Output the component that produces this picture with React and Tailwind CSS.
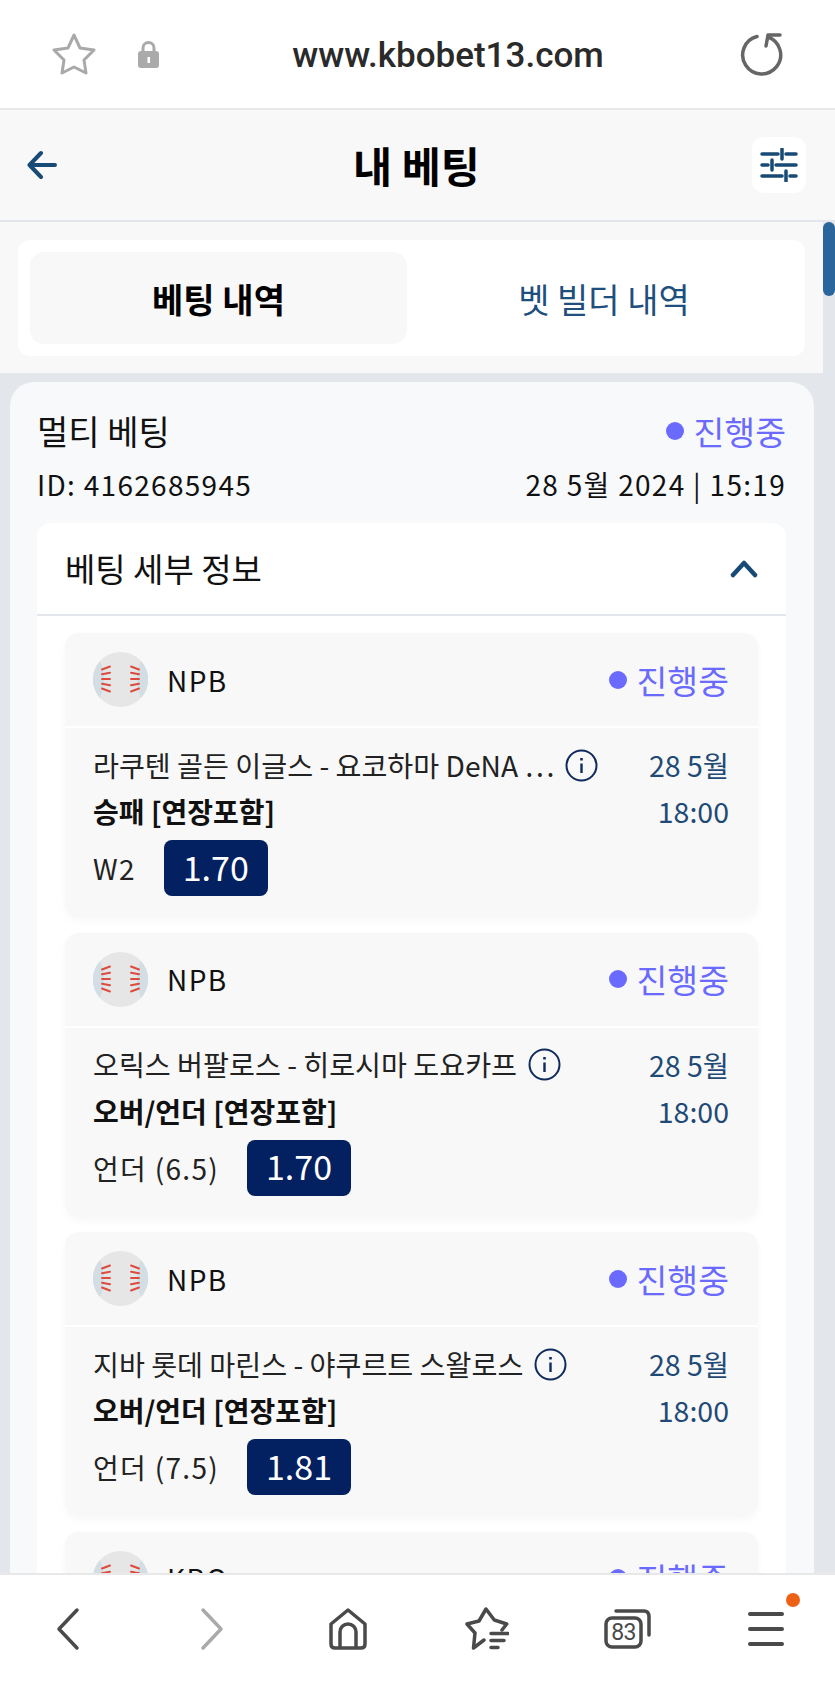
const BETS = [
  { league: "NPB", match: "라쿠텐 골든 이글스 - 요코하마 DeNA ⋯", market: "승패 [연장포함]", pick: "W2", odds: "1.70" },
  { league: "NPB", match: "오릭스 버팔로스 - 히로시마 도요카프", market: "오버/언더 [연장포함]", pick: "언더 (6.5)", odds: "1.70" },
  { league: "NPB", match: "지바 롯데 마린스 - 야쿠르트 스왈로스", market: "오버/언더 [연장포함]", pick: "언더 (7.5)", odds: "1.81" },
  { league: "KBO" },
];

function Baseball() {
  const stitches = [
    [16, -1.5], [21.500, -0.8], [27, 0], [32.500, 0.8], [38, 1.5],
  ];
  return (
    <svg width="55" height="55" viewBox="0 0 55 55" className="shrink-0">
      <circle cx="27.5" cy="27.5" r="27.5" fill="#e6e6e6" />
      <path d="M7 9A27.5 27.5 0 0 0 7 46Q15 27.5 7 9Z" fill="#d3dee4" />
      <path d="M48 9A27.5 27.5 0 0 1 48 46Q40 27.5 48 9Z" fill="#d3dee4" />
      {stitches.map(([y, t]) => (
        <g key={y} stroke="#dc4b3e" strokeWidth="1.900" strokeLinecap="round">
          <path d={`M9 ${y - t}L17 ${y + t}`} />
          <path d={`M38 ${y + t}L46 ${y - t}`} />
        </g>
      ))}
    </svg>
  );
}

function Status() {
  return (
    <span className="flex items-center gap-[10px] text-[#6a6aff] text-[33.5px] leading-none">
      <span className="w-[18px] h-[18px] rounded-full bg-[#6a6aff]" />
      진행중
    </span>
  );
}

function BetCard({ bet }) {
  return (
    <div className="shrink-0 bg-[#f8f8f8] rounded-[14px] shadow-[0_4px_10px_rgba(0,0,0,0.03)] h-[284px]">
      <div className="h-[95px] flex items-center justify-between pl-7 pr-[29px] border-b-2 border-white">
        <div className="flex items-center gap-[19px]">
          <Baseball />
          <span className="text-[28px] tracking-[1.4px] text-[#111]">{bet.league}</span>
        </div>
        <Status />
      </div>
      {bet.match && (
        <div className="flex justify-between pl-7 pr-[29px] pt-[18px]">
          <div className="min-w-0">
            <div className="flex items-center h-[38px]">
              <span className="whitespace-nowrap text-[28.2px] leading-none text-[#222]">{bet.match}</span>
              <svg width="33" height="33" viewBox="0 0 33 33" className="ml-[11px] shrink-0" fill="none" stroke="#0f2a5e" strokeWidth="2">
                <circle cx="16.5" cy="16.5" r="15" />
                <path d="M16.5 14.5V24" strokeWidth="2.4" />
                <path d="M16.5 9V11.5" strokeWidth="2.6" />
              </svg>
            </div>
            <div className="mt-[8px] text-[28px] leading-[38px] font-bold text-[#111]">{bet.market}</div>
            <div className="mt-[10px] flex items-center gap-[28px]">
              <span className="text-[28px] tracking-[1.3px] text-[#222]">{bet.pick}</span>
              <span className="w-[104px] h-[56px] pb-1 rounded-[8px] bg-[#032060] text-white text-[34px] flex items-center justify-center">{bet.odds}</span>
            </div>
          </div>
          <div className="shrink-0 text-right text-[28.5px] leading-[38px] text-[#1f4a75]">
            <div>28 5월</div>
            <div className="mt-[8px]">18:00</div>
          </div>
        </div>
      )}
    </div>
  );
}

export default function App() {
  return (
    <div className="w-[835px] h-[1683px] flex flex-col overflow-hidden bg-[#e3e6ea] font-['Noto_Sans_CJK_KR','Noto_Sans',sans-serif]">
      {/* browser bar */}
      <div className="shrink-0 h-[110px] bg-white border-b-2 border-[#e8e8e8] flex items-center pl-[52px] pr-[51px]">
        <svg width="44" height="44" viewBox="0 0 44 44" fill="none" stroke="#a9a9a9" strokeWidth="3" strokeLinejoin="round">
          <path d="M22 3L28 16L42 18L32 28L34 41L22 35L10 41L12 28L2 18L16 16Z" />
        </svg>
        <svg width="23" height="28" viewBox="0 0 23 28" className="ml-[41px]">
          <path d="M6 13V8a5.500 5.500 0 0 1 11 0V13" fill="none" stroke="#aaa" strokeWidth="3" />
          <rect x="1" y="11" width="21" height="17" rx="3" fill="#aaa" />
          <rect x="10.500" y="17" width="2.500" height="6" fill="#fff" />
        </svg>
        <div className="flex-1 text-center pt-1 text-[35px] font-medium text-[#2a2a2a] font-['Roboto',sans-serif] pr-[4px]">www.kbobet13.com</div>
        <svg width="44" height="44" viewBox="0 0 44 44" fill="none" stroke="#666" strokeWidth="3.500" strokeLinecap="round" strokeLinejoin="round">
          <path d="M17 4.500A19 19 0 1 0 28 5" />
          <path d="M40 3H28L26 14" />
        </svg>
      </div>

      {/* page header */}
      <div className="shrink-0 h-[112px] bg-[#f8f8f8] border-b-2 border-[#e3e6ea] flex items-center justify-between pl-[27px] pr-[29px]">
        <div className="w-[54px]">
          <svg width="30" height="30" viewBox="0 0 30 30" fill="none" stroke="#174a75" strokeWidth="4" strokeLinecap="round" strokeLinejoin="round">
            <path d="M14 3L2.500 15L14 27M3 15H28" />
          </svg>
        </div>
        <div className="text-[42.5px] font-bold text-black leading-none">내 베팅</div>
        <div className="w-[54px] h-[56px] bg-white rounded-[12px] flex items-center justify-center">
          <svg width="38" height="34" viewBox="0 0 38 34" fill="none" stroke="#174a75" strokeWidth="3.500" strokeLinecap="round">
            <path d="M2 6H18M26 6H36M22 1V11" />
            <path d="M2 17H8M16 17H36M12 12V22" />
            <path d="M2 28H22M30 28H36M26 23V33" />
          </svg>
        </div>
      </div>

      {/* content */}
      <div className="relative flex-1 min-h-0 overflow-hidden">
        <div className="absolute right-0 top-0 w-3 h-[74px] rounded-full bg-[#2a659c]" />
        <div className="mr-3 bg-[#f8f8f8] pt-[18px] pb-[17px] pl-[18px] pr-[18px]">
          <div className="h-[116px] bg-white rounded-[12px] p-3 flex">
            <div className="w-[377px] rounded-[14px] bg-[#f8f8f8] flex items-center justify-center text-[34px] font-bold text-black">베팅 내역</div>
            <div className="flex-1 flex items-center justify-center pl-[8px] text-[34px] text-[#1f4f7d]">벳 빌더 내역</div>
          </div>
        </div>
        <div className="mt-[9px] ml-[10px] w-[804px] bg-[#f8f9fa] rounded-[24px] pl-[27px] pr-[28px] pt-[26px]">
          <div className="flex items-center justify-between h-[46px]">
            <span className="text-[34px] leading-none text-[#111]">멀티 베팅</span>
            <Status />
          </div>
          <div className="flex items-center justify-between mt-[10px] h-[40px] text-[28px] tracking-[1.3px] text-[#111]">
            <span>ID: 4162685945</span>
            <span>28 5월 2024 | 15:19</span>
          </div>
          <div className="mt-[19px] bg-white rounded-t-[14px]">
            <div className="h-[93px] flex items-center justify-between pl-7 pr-7 border-b-2 border-[#e3e6ea]">
              <span className="text-[33px] text-[#111]">베팅 세부 정보</span>
              <svg width="28" height="18" viewBox="0 0 28 18" fill="none" stroke="#174a75" strokeWidth="4.500" strokeLinecap="round" strokeLinejoin="round">
                <path d="M3 15L14 3L25 15" />
              </svg>
            </div>
            <div className="px-7 pt-[17px] flex flex-col gap-[15.5px]">
              {BETS.map((b, i) => <BetCard key={i} bet={b} />)}
            </div>
          </div>
        </div>
      </div>

      {/* browser bottom nav */}
      <div className="shrink-0 h-[110px] bg-white border-t-2 border-[#e8e8e8] flex items-center pl-[56px]">
        <svg width="24" height="44" viewBox="0 0 24 44" fill="none" stroke="#4a4a4a" strokeWidth="3.500" strokeLinecap="round" strokeLinejoin="round">
          <path d="M21 3L3 22L21 41" />
        </svg>
        <svg width="24" height="44" viewBox="0 0 24 44" fill="none" stroke="#aaa" strokeWidth="3.500" strokeLinecap="round" strokeLinejoin="round" className="ml-[120px]">
          <path d="M3 3L21 22L3 41" />
        </svg>
        <svg width="40" height="42" viewBox="0 0 40 42" fill="none" stroke="#4a4a4a" strokeWidth="3.500" strokeLinejoin="round" className="ml-[104px]">
          <path d="M20 2L3 16V36Q3 40 7 40H33Q37 40 37 36V16Z" />
          <path d="M12 40V24a8 8 0 0 1 16 0V40" />
        </svg>
        <svg width="44" height="44" viewBox="0 0 44 44" fill="none" stroke="#4a4a4a" strokeWidth="3.500" strokeLinecap="round" strokeLinejoin="round" className="ml-[97px]">
          <path d="M37 23L41.700 17L29.300 13L21 2L14 14L2 17L10 26L8.500 41L19 33" />
          <path d="M26 26.500H43M26 33.500H39M26 40.500H33" />
        </svg>
        <div className="relative ml-[95px] w-[47px] h-[40px]">
          <svg width="47" height="40" viewBox="0 0 47 40" fill="none" stroke="#4a4a4a" strokeWidth="3.500" strokeLinecap="round">
            <rect x="2" y="9" width="35" height="29" rx="6" />
            <path d="M12 2H40Q45 2 45 8V26" />
          </svg>
          <span className="absolute left-[2px] top-[9px] w-[35px] h-[29px] flex items-center justify-center text-[23px] tracking-tight leading-none text-[#4a4a4a] font-['Roboto',sans-serif]">83</span>
        </div>
        <div className="relative ml-[97px] w-[52px] h-[34px] pr-[16px] flex flex-col justify-between">
          <span className="block h-1 rounded-full bg-[#4a4a4a]" />
          <span className="block h-1 rounded-full bg-[#4a4a4a]" />
          <span className="block h-1 rounded-full bg-[#4a4a4a]" />
          <span className="absolute -top-[19px] right-0 w-[14px] h-[14px] rounded-full bg-[#ec6115]" />
        </div>
      </div>
    </div>
  );
}
